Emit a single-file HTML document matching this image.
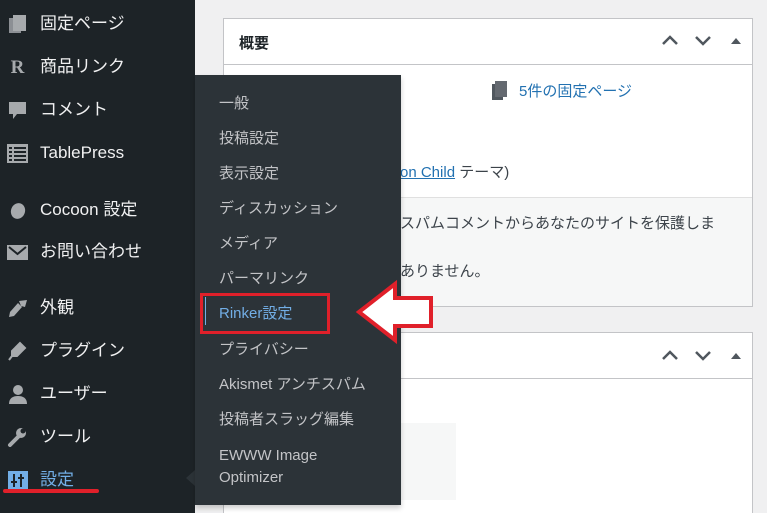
<!DOCTYPE html>
<html><head><meta charset="utf-8"><style>
*{margin:0;padding:0;box-sizing:border-box}
html,body{width:767px;height:513px;overflow:hidden}
body{background:#f0f0f1;font-family:"Liberation Sans","Noto Sans CJK JP",sans-serif;position:relative}
#side{position:absolute;left:0;top:0;width:195px;height:513px;background:#1d2327}
.mi{position:absolute;left:40px;color:#f0f0f1;font-size:17px;line-height:20px;margin-top:2px}
.ic{position:absolute;left:7px;width:21px;height:20px;margin-top:2px}
.panel{position:absolute;left:223px;width:530px;background:#fff;border:1px solid #c3c4c7}
.sub{position:absolute;left:195px;top:75px;width:206px;height:430px;background:#2c3338;box-shadow:0 3px 5px rgba(0,0,0,.2)}
.si{position:absolute;left:24px;color:#c3c4c7;font-size:15px;line-height:22px;margin-top:2px}
.t{position:absolute;font-size:15px;color:#3c434a;white-space:nowrap}
</style></head><body>
<div id="side">
<svg class="ic" style="top:12px" viewBox="0 0 21 20"><rect x="2" y="4" width="12" height="15" fill="#8c8f94"/><rect x="6" y="1" width="13" height="16" fill="#a7aaad"/></svg>
<div class="mi" style="top:12px">固定ページ</div>
<div class="ic" style="top:55px;color:#a7aaad;font:bold 19px 'Liberation Serif',serif;text-align:center">R</div>
<div class="mi" style="top:55px">商品リンク</div>
<svg class="ic" style="top:98px" viewBox="0 0 21 20"><path d="M2 2h17v12h-9l-4 5v-5h-4z" fill="#a7aaad"/></svg>
<div class="mi" style="top:98px">コメント</div>
<svg class="ic" style="top:141px" viewBox="0 0 21 20"><rect x="0" y="1" width="21" height="19" fill="#a7aaad"/><g fill="#1d2327"><rect x="2" y="4" width="3" height="2"/><rect x="7" y="4" width="12" height="2"/><rect x="2" y="8" width="3" height="2"/><rect x="7" y="8" width="12" height="2"/><rect x="2" y="12" width="3" height="2"/><rect x="7" y="12" width="12" height="2"/><rect x="2" y="16" width="3" height="2"/><rect x="7" y="16" width="12" height="2"/></g></svg>
<div class="mi" style="top:141px">TablePress</div>
<svg class="ic" style="top:198px" viewBox="0 0 21 20"><ellipse cx="11" cy="11" rx="7" ry="8" fill="#a7aaad" transform="rotate(20 11 11)"/></svg>
<div class="mi" style="top:198px">Cocoon 設定</div>
<svg class="ic" style="top:240px" viewBox="0 0 21 20"><rect x="0" y="3" width="21" height="15" fill="#a7aaad"/><path d="M2 5l8.5 7L19 5" stroke="#1d2327" stroke-width="2" fill="none"/></svg>
<div class="mi" style="top:240px">お問い合わせ</div>
<svg class="ic" style="top:296px" viewBox="0 0 21 20"><path d="M12 3l8-1-2 7-4-1zM11 5l4 4-8 9-5 1 1-5z" fill="#a7aaad"/></svg>
<div class="mi" style="top:296px">外観</div>
<svg class="ic" style="top:339px" viewBox="0 0 21 20"><path d="M13 2l-4 4 5 5 4-4zM8 7l5 5-3 3-5 0 0-5zM5 15l-3 4" fill="#a7aaad" stroke="#a7aaad" stroke-width="2"/></svg>
<div class="mi" style="top:339px">プラグイン</div>
<svg class="ic" style="top:382px" viewBox="0 0 21 20"><circle cx="11" cy="6" r="5" fill="#a7aaad"/><path d="M2 20c0-6 4-8 9-8s9 2 9 8z" fill="#a7aaad"/></svg>
<div class="mi" style="top:382px">ユーザー</div>
<svg class="ic" style="top:425px" viewBox="0 0 21 20"><path d="M3 18l9-9" stroke="#a7aaad" stroke-width="4" stroke-linecap="round"/><circle cx="14" cy="6" r="5" fill="#a7aaad"/><circle cx="16" cy="4" r="2.5" fill="#1d2327"/></svg>
<div class="mi" style="top:425px">ツール</div>
<svg class="ic" style="top:468px" viewBox="0 0 21 20"><rect x="1" y="1" width="20" height="19" fill="#72aee6"/><path d="M7 4v13M4 12h6M14 4v13M11 8h6" stroke="#1d2327" stroke-width="2"/></svg>
<div class="mi" style="top:468px;color:#72aee6">設定</div>
<div style="position:absolute;left:3px;top:489px;width:96px;height:4px;border-radius:2px;background:#e0202a"></div>
<div style="position:absolute;left:186px;top:470px;border:8px solid transparent;border-right:9px solid #2c3338;border-left:0"></div>
</div>

<div class="panel" style="top:18px;height:289px">
<div style="height:46px;border-bottom:1px solid #c3c4c7"></div>
<div style="position:absolute;left:0;right:0;top:178px;bottom:0;background:#f6f7f7;border-top:1px solid #e0e0e0"></div>
</div>
<div class="panel" style="top:332px;height:190px;border-bottom:none"><div style="height:46px;border-bottom:1px solid #c3c4c7"></div></div>
<div class="t" style="left:239px;top:32px;font-weight:bold;color:#1d2327">概要</div>
<svg style="position:absolute;left:655px;top:30px" width="100" height="20"><path d="M8 14l7-7 7 7M41 7l7 7 7-7" stroke="#50575e" stroke-width="2.5" fill="none"/><path d="M76 14l5-6 5 6z" fill="#50575e"/></svg>
<svg style="position:absolute;left:655px;top:345px" width="100" height="20"><path d="M8 14l7-7 7 7M41 7l7 7 7-7" stroke="#50575e" stroke-width="2.5" fill="none"/><path d="M76 14l5-6 5 6z" fill="#50575e"/></svg>
<svg style="position:absolute;left:491px;top:80px" width="17" height="22"><rect x="1" y="4" width="11" height="16" fill="#50575e"/><rect x="4" y="1" width="12" height="16" fill="#646970"/></svg>
<div class="t" style="left:519px;top:80px;color:#2271b1">5件の固定ページ</div>
<div class="t" style="left:400px;top:161px"><span style="color:#2271b1;text-decoration:underline">on Child</span> テーマ)</div>
<div class="t" style="left:400px;top:212px">スパムコメントからあなたのサイトを保護しま</div>
<div class="t" style="left:400px;top:260px">ありません。</div>
<div style="position:absolute;left:400px;top:423px;width:56px;height:77px;background:#f6f7f7"></div>

<div class="sub">
<div class="si" style="top:16px">一般</div>
<div class="si" style="top:51px">投稿設定</div>
<div class="si" style="top:86px">表示設定</div>
<div class="si" style="top:121px">ディスカッション</div>
<div class="si" style="top:156px">メディア</div>
<div class="si" style="top:191px">パーマリンク</div>
<div style="position:absolute;left:10px;top:222px;width:1px;height:28px;background:#72aee6"></div>
<div class="si" style="top:226px;color:#72aee6">Rinker設定</div>
<div class="si" style="top:262px">プライバシー</div>
<div class="si" style="top:297px">Akismet アンチスパム</div>
<div class="si" style="top:332px">投稿者スラッグ編集</div>
<div class="si" style="top:368px">EWWW Image<br>Optimizer</div>
</div>
<div style="position:absolute;left:200px;top:293px;width:130px;height:41px;border:3px solid #e0202a"></div>
<svg style="position:absolute;left:350px;top:278px" width="90" height="70"><path d="M9 34L45 6V20H81V48H45V62Z" fill="#fff" stroke="#e0202a" stroke-width="4" stroke-linejoin="miter"/></svg>
</body></html>
